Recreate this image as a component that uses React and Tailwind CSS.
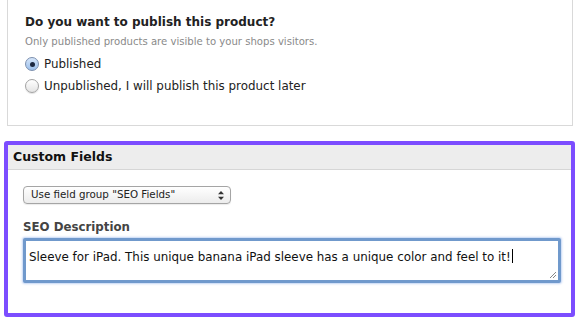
import React from "react";

function Radio({ checked }) {
  if (checked) {
    return (
      <span className="relative inline-block h-[14px] w-[14px] shrink-0 rounded-full border border-[#7b8fae] bg-gradient-to-b from-[#d6e6fa] to-[#9bbfeb]">
        <span className="absolute left-[3.5px] top-[3.5px] block h-[5px] w-[5px] rounded-full bg-[#1b2840]" />
      </span>
    );
  }
  return (
    <span className="inline-block h-[14px] w-[14px] shrink-0 rounded-full border border-[#a3a3a3] bg-gradient-to-b from-[#ffffff] to-[#e4e4e4] shadow-[0_1px_1px_rgba(0,0,0,0.12)]" />
  );
}

export default function App() {
  return (
    <div
      className="min-h-screen w-[581px] bg-white text-[#222]"
      style={{ fontFamily: '"DejaVu Sans", Verdana, sans-serif' }}
    >
      {/* publish panel */}
      <div className="ml-[7px] w-[566px] border-x border-b border-[#d9d9d9] pl-[17px] pt-[14px] pb-[31px]">
        <h2 className="text-[12px] font-bold leading-[17px] text-[#222]">
          Do you want to publish this product?
        </h2>
        <p className="mt-[4px] text-[10.1px] leading-[14px] text-[#8a8a8a]">
          Only published products are visible to your shops visitors.
        </p>
        <label className="mt-[7px] flex items-center gap-[5px] text-[11.9px] leading-[16px]">
          <Radio checked />
          Published
        </label>
        <label className="mt-[6px] flex items-center gap-[5px] text-[11.9px] leading-[16px]">
          <Radio checked={false} />
          Unpublished, I will publish this product later
        </label>
      </div>

      {/* custom fields, highlighted */}
      <div className="ml-[4px] mt-[15px] w-[571px] rounded-[3px] border-[4px] border-[#7c4dff]">
        <div className="border-b border-[#d6d6d6] bg-[#ededed] pl-[5px] pt-[3px] pb-[4px]">
          <h3 className="text-[12.5px] font-bold leading-[17px] text-[#111]">Custom Fields</h3>
        </div>
        <div className="pl-[15px] pr-[8px] pt-[16px] pb-[30px]">
          <div className="flex h-[18px] w-[208px] items-center justify-between rounded-[4px] border border-[#a5a5a5] bg-gradient-to-b from-[#ffffff] to-[#ececec] pl-[7px] pr-[6px] text-[10.3px] shadow-[0_1px_1px_rgba(0,0,0,0.08)]">
            <span>Use field group "SEO Fields"</span>
            <svg width="6" height="9" viewBox="0 0 6 9" className="mt-[1px]">
              <path d="M3 0L6 3.2H0Z" fill="#333" />
              <path d="M3 9L6 5.8H0Z" fill="#333" />
            </svg>
          </div>
          <div className="mt-[15px] text-[11.8px] font-bold leading-[17px] text-[#444]">SEO Description</div>
          <div className="relative mt-[2px] h-[45px] w-[538px] rounded-[2px] border-[3px] border-[#7099cc] bg-white shadow-[0_0_2px_1px_rgba(120,160,230,0.45)]">
            <div className="pl-[3px] pt-[6px] text-[11.9px] leading-[16px] text-[#111]">
              Sleeve for iPad. This unique banana iPad sleeve has a unique color and feel to it!
              <span className="ml-[1px] inline-block h-[14px] w-px translate-y-[2px] bg-black" />
            </div>
            <svg width="8" height="8" viewBox="0 0 8 8" className="absolute bottom-[1px] right-[1px]">
              <path d="M1 7L7 1M4 7L7 4" stroke="#888" strokeWidth="1" />
            </svg>
          </div>
        </div>
      </div>
    </div>
  );
}
